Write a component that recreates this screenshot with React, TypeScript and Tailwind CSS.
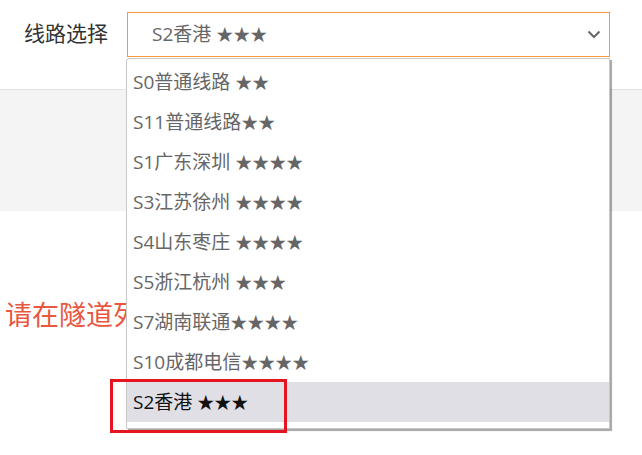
import React from "react";

const items: [string, string][] = [
  ["S0普通线路 ", "★★"],
  ["S11普通线路", "★★"],
  ["S1广东深圳 ", "★★★★"],
  ["S3江苏徐州 ", "★★★★"],
  ["S4山东枣庄 ", "★★★★"],
  ["S5浙江杭州 ", "★★★"],
  ["S7湖南联通", "★★★★"],
  ["S10成都电信", "★★★★"],
  ["S2香港 ", "★★★"],
];

function Label({ t, s }: { t: string; s: string }) {
  return (
    <span className="whitespace-pre">
      {t}
      <span className="text-[17px]">{s}</span>
    </span>
  );
}

export default function App() {
  return (
    <div
      className="relative w-[642px] h-[455px] overflow-hidden bg-white"
      style={{ fontFamily: '"Open Sans", "Noto Sans CJK SC", sans-serif' }}
    >
      <div className="flex items-start h-[68px] pt-[12px] pb-[12px]">
        <div className="w-[127px] pl-[24px] h-[44px] flex items-center text-[21px] text-[#333]">
          线路选择
        </div>
        <div className="w-[483px] h-[45px] border border-[#f39a3b] flex items-center justify-between pl-[24px] pr-[8px] text-[19px] text-[#666]">
          <Label t="S2香港 " s="★★★" />
          <svg width="14" height="9" viewBox="0 0 14 9" fill="none">
            <path d="M1.5 1.5 L7 7 L12.5 1.5" stroke="#666" strokeWidth="2" />
          </svg>
        </div>
      </div>
      <div className="mt-[21px] h-[122px] bg-[#f4f4f4] border-t border-[#e4e4e4]" />
      <div className="mt-[86px] pl-[5px] text-[27px] leading-[36px] text-[#e8573f]">
        请在隧道列
      </div>

      <div className="absolute left-[126px] top-[58px] w-[484px] h-[371px] bg-white border border-[#c8c8c8] rounded-tl-[3px] shadow-[2px_2px_1px_rgba(0,0,0,0.35)] py-[3px]">
        {items.map(([t, s], i) => (
          <div
            key={i}
            className={
              "h-[40px] flex items-center pl-[6px] text-[19px] " +
              (i === items.length - 1 ? "bg-[#e0dfe5] text-[#111]" : "text-[#666]")
            }
          >
            <Label t={t} s={s} />
          </div>
        ))}
      </div>

      <div className="absolute left-[110px] top-[379px] w-[177px] h-[54px] border-[3px] border-[#e5141e]" />
    </div>
  );
}
